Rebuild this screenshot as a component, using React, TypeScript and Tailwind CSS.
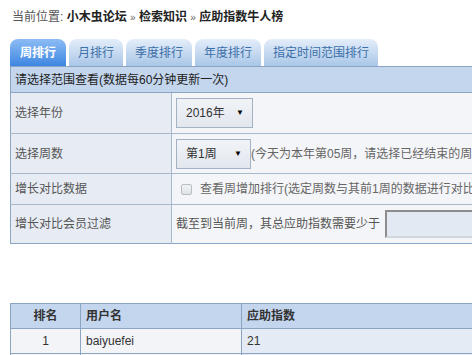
import React from 'react';

// 应助指数牛人榜 — 周排行
const tabs = ['周排行', '月排行', '季度排行', '年度排行', '指定时间范围排行'];

function Select({ value, w }: { value: string; w: string }) {
  return (
    <div className={`${w} h-[30px] flex items-center justify-between pl-[9px] pr-[8px] border border-[#a3b2c4] bg-gradient-to-b from-[#f1f3f7] to-[#e2e7ee] text-[#333]`}>
      <span>{value}</span>
      <span className="text-[8px] text-black">▼</span>
    </div>
  );
}

export default function App() {
  const [active, setActive] = React.useState(0);

  return (
    <div className="w-[472px] h-[355px] overflow-hidden bg-white text-[12px] font-['Liberation_Sans','Noto_Sans_CJK_SC',sans-serif]">
      <div className="h-[39px] pl-[12px] pt-[9px] leading-[16px] text-[#555] whitespace-nowrap">
        当前位置: <b className="text-[#222]">小木虫论坛</b> <span className="text-[10px] text-[#666]">»</span>{' '}
        <b className="text-[#222]">检索知识</b> <span className="text-[10px] text-[#666]">»</span>{' '}
        <b className="text-[#222]">应助指数牛人榜</b>
      </div>

      <div className="ml-[10px] flex gap-[3px] h-[27px]">
        {tabs.map((t, i) => (
          <button
            key={t}
            onClick={() => setActive(i)}
            className={
              i === active
                ? 'h-[27px] px-[10px] rounded-t-[8px] bg-gradient-to-b from-[#8cbcf4] to-[#3d86e2] text-white font-bold whitespace-nowrap'
                : 'h-[27px] px-[9px] rounded-t-[8px] bg-gradient-to-b from-[#e4eefa] to-[#a9c6e7] text-[#3b6fa8] whitespace-nowrap'
            }
          >
            {t}
          </button>
        ))}
      </div>

      <table className="ml-[10px] w-[640px] border-collapse border border-[#8ca5c2] text-[#555]">
        <tbody>
          <tr className="h-[26px] bg-[#c3d6ee]">
            <td colSpan={2} className="px-[4px] text-[#222] border-b border-[#8ca5c2]">
              请选择范围查看(数据每60分钟更新一次)
            </td>
          </tr>
          <tr className="h-[41px]">
            <td className="w-[161px] px-[4px] bg-[#e7ecf4] border-b border-r border-[#a8b9ce]">选择年份</td>
            <td className="px-[4px] bg-[#f4f5f8] border-b border-[#a8b9ce]">
              <Select value="2016年" w="w-[77px]" />
            </td>
          </tr>
          <tr className="h-[40px]">
            <td className="px-[4px] bg-[#e7ecf4] border-b border-r border-[#a8b9ce]">选择周数</td>
            <td className="px-[4px] bg-[#f4f5f8] border-b border-[#a8b9ce] whitespace-nowrap">
              <div className="flex items-center">
                <Select value="第1周" w="w-[75px]" />
                <span className="text-[#666]">(今天为本年第05周，请选择已经结束的周)</span>
              </div>
            </td>
          </tr>
          <tr className="h-[31px]">
            <td className="px-[4px] bg-[#e7ecf4] border-b border-r border-[#a8b9ce]">增长对比数据</td>
            <td className="px-[4px] bg-[#f4f5f8] border-b border-[#a8b9ce] whitespace-nowrap text-[#666]">
              <div className="flex items-center">
                <span className="ml-[5px] mr-[8px] w-[11px] h-[11px] border border-[#b8bec6] rounded-[2px] bg-gradient-to-b from-[#f2f3f5] to-[#dfe2e6]" />
                查看周增加排行(选定周数与其前1周的数据进行对比)
              </div>
            </td>
          </tr>
          <tr className="h-[39px]">
            <td className="px-[4px] bg-[#e7ecf4] border-r border-[#a8b9ce]">增长对比会员过滤</td>
            <td className="px-[4px] bg-[#f4f5f8] whitespace-nowrap text-[#555]">
              <div className="flex items-center">
                截至到当前周，其总应助指数需要少于
                <div className="ml-[5px] w-[200px] h-[28px] border-2 border-t-[#8c8c8c] border-l-[#8c8c8c] border-r-[#d0d6de] border-b-[#d0d6de] bg-[#e3e9f2]" />
              </div>
            </td>
          </tr>
        </tbody>
      </table>

      <table className="ml-[10px] mt-[59px] w-[640px] border-collapse border border-[#8ca5c2] text-[#333]">
        <thead>
          <tr className="h-[25px] bg-[#c3d6ee] text-[#333] font-bold">
            <td className="w-[70px] text-center border-r border-b border-[#8ca5c2]">排名</td>
            <td className="w-[161px] px-[5px] border-r border-b border-[#8ca5c2]">用户名</td>
            <td className="px-[5px] border-b border-[#8ca5c2]">应助指数</td>
          </tr>
        </thead>
        <tbody>
          <tr className="h-[25px]">
            <td className="text-center bg-[#f2f4f8] border-r border-b border-[#8ca5c2]">1</td>
            <td className="px-[5px] bg-[#f2f4f8] border-r border-b border-[#8ca5c2]">baiyuefei</td>
            <td className="px-[5px] bg-[#e4ebf4] border-b border-[#8ca5c2]">21</td>
          </tr>
          <tr className="h-[25px]">
            <td className="bg-[#f2f4f8] border-r border-[#8ca5c2]"></td>
            <td className="bg-[#f2f4f8] border-r border-[#8ca5c2]"></td>
            <td className="bg-[#e4ebf4]"></td>
          </tr>
        </tbody>
      </table>
    </div>
  );
}
